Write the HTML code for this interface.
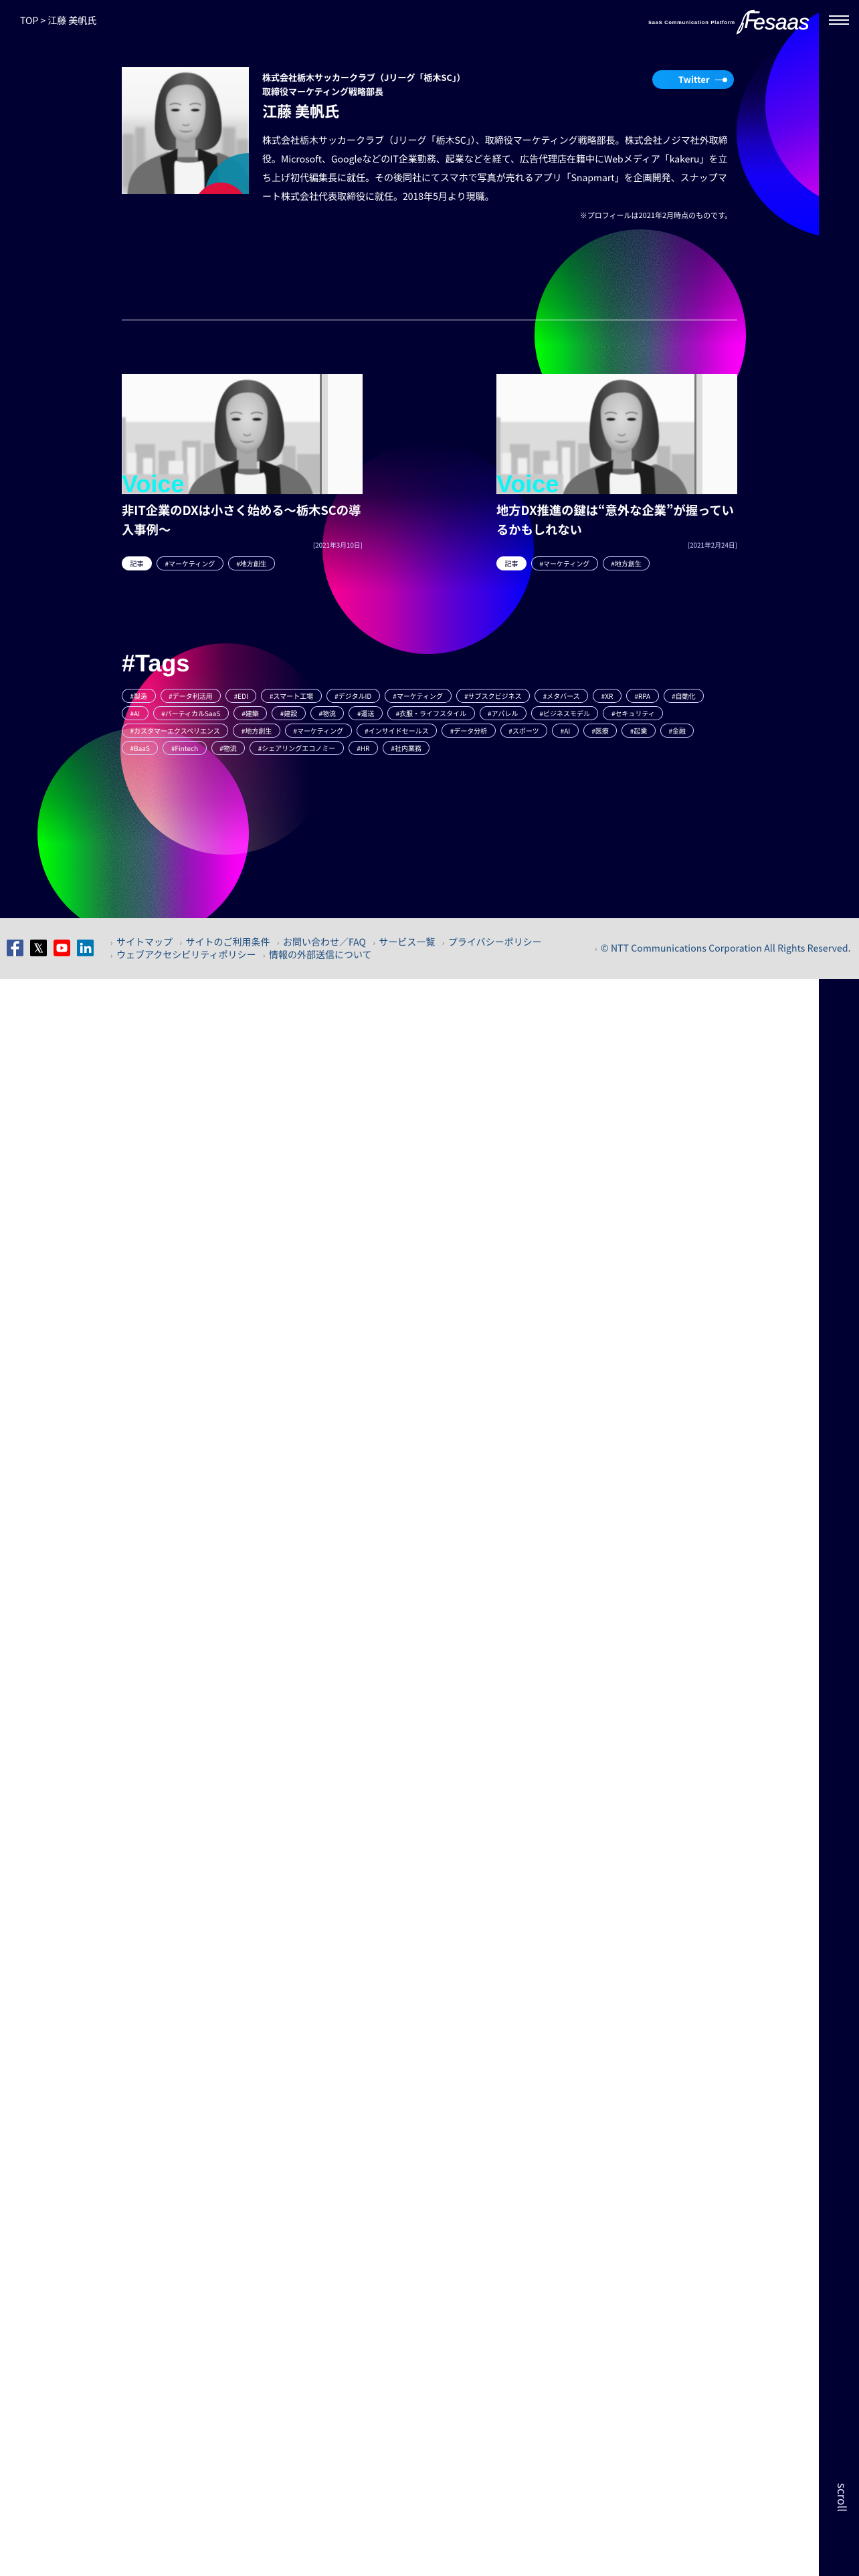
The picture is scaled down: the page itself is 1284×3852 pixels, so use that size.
<!DOCTYPE html>
<html lang="ja"><head><meta charset="utf-8"><title>江藤 美帆氏</title>
<style>
*{box-sizing:border-box;margin:0;padding:0}
html,body{width:1284px;height:3852px;background:#fff;overflow:hidden}
body{position:relative;font-family:"Noto Sans CJK JP","Liberation Sans",sans-serif;color:#fff}
.a{position:absolute;white-space:nowrap}
#navy{position:absolute;left:0;top:0;width:1284px;height:1373px;background:#000033}
#strip{position:absolute;left:1224px;top:0;width:60px;height:3852px;background:#000033}
#foot{position:absolute;left:0;top:1373px;width:1284px;height:91px;background:#e0e0e0}
.row{position:absolute;left:182px;display:flex;gap:7px}
.t{display:block;height:21px;line-height:19px;border:1px solid #d4d4ff;border-radius:11px;padding:0 11.5px;font-size:10px;color:#fff;white-space:nowrap}
.t.w{background:#fff;color:#000033;border-color:#fff}
.fl{position:absolute;font-size:14px;line-height:19px;color:#1b4b7d;white-space:nowrap}
.fl i{display:inline-block;width:9px;font-style:normal;color:#777;font-size:11px}
.fl span{margin-right:10.5px}
.title{font-size:18.3px;font-weight:700;line-height:29px}
.date{font-size:9.8px;color:#d8d8ff}
.voice{font-family:"Liberation Sans",sans-serif;font-weight:700;font-size:36px;color:#0ff4f4;line-height:36px}
</style></head><body>
<div id="navy"></div><div id="strip"></div>

<svg class="a" style="left:0;top:0" width="1224" height="1373" viewBox="0 0 1224 1373">
<defs>
<linearGradient id="gGM"><stop offset="0" stop-color="#00ff00"/><stop offset=".14" stop-color="#00d020"/><stop offset=".36" stop-color="#0b6238"/><stop offset=".53" stop-color="#2f4c64"/><stop offset=".7" stop-color="#8a10b0"/><stop offset=".92" stop-color="#f000f0"/><stop offset="1" stop-color="#ff00ff"/></linearGradient>
<linearGradient id="gPB"><stop offset="0" stop-color="#ff0090"/><stop offset=".3" stop-color="#c000a8"/><stop offset=".6" stop-color="#6000d0"/><stop offset="1" stop-color="#0000ff"/></linearGradient>
<linearGradient id="gB" x1="0" y1="0" x2="0" y2="1"><stop offset="0" stop-color="#100070"/><stop offset=".3" stop-color="#200090"/><stop offset=".55" stop-color="#2000f0"/><stop offset="1" stop-color="#0000ff"/></linearGradient>
<linearGradient id="gI" x1="0" y1="0" x2=".45" y2="1"><stop offset=".1" stop-color="#0000ff"/><stop offset=".55" stop-color="#5a00f0"/><stop offset="1" stop-color="#f000f0"/></linearGradient>
<linearGradient id="gR" x1="0" y1="0" x2="0" y2="1"><stop offset=".1" stop-color="#e80048"/><stop offset=".4" stop-color="#d82858"/><stop offset=".75" stop-color="#d85a68"/><stop offset="1" stop-color="#dca060"/></linearGradient>
<linearGradient id="mV" x1="0" y1="0" x2="0" y2="1"><stop offset="0" stop-color="#666"/><stop offset=".35" stop-color="#bbb"/><stop offset=".55" stop-color="#fff"/></linearGradient>
<linearGradient id="mP" x1="0" y1="0" x2="0" y2="1"><stop offset="0" stop-color="#000"/><stop offset=".25" stop-color="#333"/><stop offset=".5" stop-color="#aaa"/><stop offset=".7" stop-color="#fff"/></linearGradient>
<linearGradient id="mR"><stop offset="0" stop-color="#fff"/><stop offset=".15" stop-color="#fff"/><stop offset=".5" stop-color="#555"/><stop offset=".9" stop-color="#000"/></linearGradient>
<linearGradient id="mN"><stop offset=".15" stop-color="#000"/><stop offset=".35" stop-color="#555"/><stop offset=".58" stop-color="#555"/><stop offset=".8" stop-color="#000"/></linearGradient>
<mask id="m1" maskContentUnits="objectBoundingBox"><rect width="1" height="1" fill="url(#mV)"/></mask>
<mask id="m2" maskContentUnits="objectBoundingBox"><rect width="1" height="1" fill="url(#mP)"/></mask>
<mask id="m3" maskContentUnits="objectBoundingBox"><rect width="1" height="1" fill="url(#mR)"/></mask>
<mask id="m4" maskContentUnits="objectBoundingBox"><rect width="1" height="1" fill="url(#mN)"/></mask>
<filter id="nz" x="0" y="0" width="100%" height="100%"><feTurbulence type="fractalNoise" baseFrequency="1.1" numOctaves="2" seed="4"/><feColorMatrix values="0 0 0 0 .62  0 0 0 0 .66  0 0 0 0 .7  2.4 0 0 0 -.9"/></filter>
<clipPath id="cG1"><circle cx="957" cy="501" r="158"/></clipPath>
<clipPath id="cG2"><circle cx="214" cy="1246" r="158"/></clipPath>
</defs>
<circle cx="1259" cy="198" r="158" fill="url(#gB)" mask="url(#m2)"/>
<circle cx="1302" cy="156" r="158" fill="url(#gI)"/>
<circle cx="640" cy="820" r="158" fill="url(#gPB)" mask="url(#m2)"/>
<circle cx="957" cy="501" r="158" fill="url(#gGM)" mask="url(#m1)"/>
<g clip-path="url(#cG1)"><rect x="799" y="343" width="316" height="316" filter="url(#nz)" mask="url(#m4)"/></g>
<circle cx="214" cy="1246" r="158" fill="url(#gGM)" mask="url(#m1)"/>
<g clip-path="url(#cG2)"><rect x="56" y="1088" width="316" height="316" filter="url(#nz)" mask="url(#m4)"/></g>
<circle cx="338" cy="1120" r="158" fill="url(#gR)" mask="url(#m3)" style="mix-blend-mode:screen"/>
</svg>

<div class="a" style="left:30px;top:20px;font-size:14px;line-height:22px">TOP &gt; 江藤 美帆氏</div>

<div class="a" style="left:969px;top:28px;font-size:7.5px;line-height:12px;font-weight:700;letter-spacing:.75px;font-family:'Liberation Sans',sans-serif">SaaS Communication Platform</div>
<div class="a" style="left:1112px;top:7px;font-size:36px;line-height:46px;font-style:italic;font-family:'Liberation Sans',sans-serif">F</div>
<div class="a" style="left:1126px;top:13px;font-size:32px;line-height:40px;font-style:italic;letter-spacing:-.4px;font-family:'Liberation Sans',sans-serif;-webkit-text-stroke:.4px #fff">esaas</div>
<svg class="a" style="left:1098px;top:14px" width="34" height="38" viewBox="0 0 34 38"><path d="M30 2C20 1 15 8 12 18C10 25 6 28 4 36C9 34 12 28 13 20" fill="none" stroke="#fff" stroke-width="2"/></svg>
<div class="a" style="left:1239px;top:23px;width:30px;height:2px;background:#fff"></div>
<div class="a" style="left:1239px;top:29px;width:30px;height:2px;background:#fff"></div>
<div class="a" style="left:1239px;top:35px;width:30px;height:2px;background:#fff"></div>

<svg class="a" style="left:182px;top:100px" width="190" height="190" viewBox="0 0 190 190">
<defs>
<linearGradient id="s1" x1="0" y1="0" x2="0" y2="1"><stop offset="0" stop-color="#fafafa"/><stop offset=".36" stop-color="#f2f2f2"/><stop offset=".46" stop-color="#dadada"/><stop offset="1" stop-color="#c4c4c4"/></linearGradient>
<linearGradient id="hr" x1="0" y1="0" x2="1" y2="0"><stop offset="0" stop-color="#2e2e2e"/><stop offset=".5" stop-color="#666"/><stop offset="1" stop-color="#2e2e2e"/></linearGradient>
<radialGradient id="fc" cx=".5" cy=".42" r=".62"><stop offset="0" stop-color="#dcdcdc"/><stop offset=".7" stop-color="#c0c0c0"/><stop offset="1" stop-color="#8e8e8e"/></radialGradient>
<filter id="bl1"><feGaussianBlur stdDeviation="2.2"/></filter>
<filter id="bl2"><feGaussianBlur stdDeviation=".8"/></filter>
<filter id="bl3"><feGaussianBlur stdDeviation="1.4"/></filter>
<g id="person">
<path d="M187 9C226 9 243 50 243 95C243 118 231 131 215 131L160 131C148 131 139 118 139 95C139 50 150 9 187 9Z" fill="url(#hr)"/>
<path d="M172 105H202V152H172Z" fill="#a8a8a8"/>
<path d="M156 58C156 36 170 28 190 28C208 28 218 40 218 60C218 88 208 119 187 119C168 119 156 88 156 58Z" fill="url(#fc)"/>
<path d="M96 210C96 158 118 150 160 134L172 142L215 142L238 135C265 145 288 155 290 210Z" fill="#6e6e6e"/>
<path d="M158 210L147 142L175 128L174 148L178 210ZM240 210L236 140L206 128L206 148L218 210Z" fill="#1c1c1c"/>
<path d="M170 210C170 160 168 150 172 148C182 152 200 152 212 148C216 152 216 165 216 210Z" fill="#f4f4f4"/>
<ellipse cx="171" cy="68" rx="7" ry="2.4" fill="#222"/><ellipse cx="202" cy="68" rx="7" ry="2.4" fill="#222"/>
<path d="M162 60Q171 55 180 60M193 60Q202 55 211 60" stroke="#555" stroke-width="1.6" fill="none"/>
<path d="M182 90Q187 95 193 90" stroke="#888" stroke-width="2" fill="none"/>
<path d="M177 100Q187 106 198 100Q187 103 177 100Z" fill="#777" stroke="#888"/>
</g>
<g id="city">
<path d="M0 72H300V180H0Z" fill="#dcdcdc"/>
<path d="M0 65H6V180H0ZM20 105H50V180H20ZM55 115H80V180H55ZM90 100H118V180H90ZM122 104H140V180H122ZM240 108H260V180H240ZM262 120H298V180H262Z" fill="#bcbcbc"/>
<path d="M8 118H22V180H8ZM32 126H46V180H32ZM70 130H92V180H70ZM98 110H110V180H98Z" fill="#eeeeee"/>
<path d="M0 150H100V180H0Z" fill="#cacaca"/>
</g>
</defs>
<rect width="190" height="190" fill="#f6f6f6"/>
<g filter="url(#bl1)"><rect y="0" width="190" height="190" fill="url(#s1)"/><path d="M20 90H35V170H20ZM150 90H170V170H150ZM0 100H18V180H0ZM172 108H190V170H172Z" fill="#b4b4b4"/></g>
<g filter="url(#bl2)" transform="translate(-84 0) scale(.96 .95)"><use href="#person"/></g>
<circle cx="190" cy="195" r="66" fill="#0a8aa8" opacity=".92"/>
<circle cx="148" cy="213" r="40" fill="#e0103c"/>
</svg>

<div class="a" style="left:392px;top:105px;font-size:13px;font-weight:700;line-height:21px">株式会社栃木サッカークラブ（Jリーグ「栃木SC」）<br>取締役マーケティング戦略部長</div>
<div class="a" style="left:392px;top:150px;font-size:22px;font-weight:700;line-height:32px">江藤 美帆氏</div>
<div class="a" style="left:392px;top:196px;font-size:14px;line-height:28px;font-feature-settings:'palt' 0">株式会社栃木サッカークラブ（Jリーグ「栃木SC」）、取締役マーケティング戦略部長。株式会社ノジマ社外取締<br>役。Microsoft、GoogleなどのIT企業勤務、起業などを経て、広告代理店在籍中にWebメディア「kakeru」を立<br>ち上げ初代編集長に就任。その後同社にてスマホで写真が売れるアプリ「Snapmart」を企画開発、スナップマ<br>ート株式会社代表取締役に就任。2018年5月より現職。</div>
<div class="a" style="right:190px;top:313px;font-size:11px;line-height:18px">※プロフィールは2021年2月時点のものです。</div>

<div class="a" style="left:975px;top:105px;width:122px;height:28px;border-radius:14px;background:linear-gradient(90deg,#0a9cf8,#0a8ff0)"></div>
<div class="a" style="left:1014px;top:108px;font-size:13px;font-weight:700;line-height:22px">Twitter</div>
<div class="a" style="left:1069px;top:118.5px;width:14px;height:1.5px;background:#fff"></div>
<div class="a" style="left:1080px;top:116px;width:7px;height:7px;border-radius:50%;background:#fff"></div>

<div class="a" style="left:182px;top:478px;width:920px;height:1px;background:#fff"></div>

<svg class="a" style="left:182px;top:559px" width="360" height="180" viewBox="0 0 360 180">
<rect width="360" height="180" fill="#fbfbfb"/>
<g filter="url(#bl3)"><use href="#city"/></g>
<rect x="296" width="3" height="180" fill="#777"/><rect x="299" width="9" height="180" fill="#dcdcdc"/><rect x="308" width="52" height="180" fill="#fafafa"/>
<g filter="url(#bl2)"><use href="#person"/></g>
</svg>
<div class="a voice" style="left:182px;top:706px;height:33px;overflow:hidden">Voice</div>

<svg class="a" style="left:742px;top:559px" width="360" height="180" viewBox="0 0 360 180">
<rect width="360" height="180" fill="#fbfbfb"/>
<g filter="url(#bl3)"><use href="#city"/></g>
<rect x="296" width="3" height="180" fill="#777"/><rect x="299" width="9" height="180" fill="#dcdcdc"/><rect x="308" width="52" height="180" fill="#fafafa"/>
<g filter="url(#bl2)"><use href="#person"/></g>
</svg>
<div class="a voice" style="left:742px;top:706px;height:33px;overflow:hidden">Voice</div>

<div class="a title" style="left:182px;top:749px">非IT企業のDXは小さく始める〜栃木SCの導<br>入事例〜</div>
<div class="a title" style="left:742px;top:749px">地方DX推進の鍵は“意外な企業”が握ってい<br>るかもしれない</div>
<div class="a date" style="right:742px;top:807px;line-height:16px">[2021年3月10日]</div>
<div class="a date" style="right:182px;top:807px;line-height:16px">[2021年2月24日]</div>

<div class="row" style="top:832px"><span class="t w">記事</span><span class="t">#マーケティング</span><span class="t">#地方創生</span></div>
<div class="row" style="top:832px;left:742px"><span class="t w">記事</span><span class="t">#マーケティング</span><span class="t">#地方創生</span></div>

<div class="a" style="left:182px;top:970px;font-family:'Liberation Sans',sans-serif;font-weight:700;font-size:36px;line-height:44px">#Tags</div>

<div class="row" style="top:1030px"><span class="t">#製造</span><span class="t">#データ利活用</span><span class="t">#EDI</span><span class="t">#スマート工場</span><span class="t">#デジタルID</span><span class="t">#マーケティング</span><span class="t">#サブスクビジネス</span><span class="t">#メタバース</span><span class="t">#XR</span><span class="t">#RPA</span><span class="t">#自動化</span></div>
<div class="row" style="top:1056px"><span class="t">#AI</span><span class="t">#バーティカルSaaS</span><span class="t">#建築</span><span class="t">#建設</span><span class="t">#物流</span><span class="t">#運送</span><span class="t">#衣服・ライフスタイル</span><span class="t">#アパレル</span><span class="t">#ビジネスモデル</span><span class="t">#セキュリティ</span></div>
<div class="row" style="top:1082px"><span class="t">#カスタマーエクスペリエンス</span><span class="t">#地方創生</span><span class="t">#マーケティング</span><span class="t">#インサイドセールス</span><span class="t">#データ分析</span><span class="t">#スポーツ</span><span class="t">#AI</span><span class="t">#医療</span><span class="t">#起業</span><span class="t">#金融</span></div>
<div class="row" style="top:1108px"><span class="t">#BaaS</span><span class="t">#Fintech</span><span class="t">#物流</span><span class="t">#シェアリングエコノミー</span><span class="t">#HR</span><span class="t">#社内業務</span></div>

<div id="foot"></div>
<svg class="a" style="left:10px;top:1405px" width="130" height="25" viewBox="0 0 130 25">
<rect width="25" height="25" rx="2" fill="#3b5998"/>
<path d="M14 25V14.5H18L18.600 10.500H14V8C14 6.800 14.500 6 16.200 6H18.700V2.400C18 2.300 16.700 2.200 15.300 2.200C12.200 2.200 10 4 10 7.500V10.500H6.500V14.500H10V25Z" fill="#fff"/>
<rect x="35" width="25" height="25" rx="2" fill="#000"/>
<path d="M42 6H46.500L53.500 19H49ZM43.800 7L49.600 18M52.500 6L48.300 11.500M46.300 14L42.300 19" fill="none" stroke="#fff" stroke-width="1"/>
<rect x="70" width="25" height="25" rx="3" fill="#f00"/>
<rect x="74.500" y="6.500" width="16" height="12" rx="3" fill="#fff"/>
<path d="M80.500 9.500L85.500 12.500L80.500 15.500Z" fill="#f00"/>
<rect x="105" width="25" height="25" rx="2" fill="#0077b5"/>
<rect x="110" y="10" width="3.500" height="10" fill="#fff"/><circle cx="111.700" cy="6.700" r="2" fill="#fff"/>
<path d="M116 10H119.300V11.500C120 10.500 121 9.800 122.700 9.800C125.500 9.800 126.500 11.500 126.500 14.300V20H123V14.800C123 13.300 122.500 12.700 121.400 12.700C120.200 12.700 119.500 13.500 119.500 15V20H116Z" fill="#fff"/>
</svg>
<div class="fl" style="left:165px;top:1400px"><i>›</i><span>サイトマップ</span><i>›</i><span>サイトのご利用条件</span><i>›</i><span>お問い合わせ／FAQ</span><i>›</i><span>サービス一覧</span><i>›</i><span>プライバシーポリシー</span></div>
<div class="fl" style="left:165px;top:1419px"><i>›</i><span>ウェブアクセシビリティポリシー</span><i>›</i><span>情報の外部送信について</span></div>
<div class="fl" style="left:889px;top:1409px;letter-spacing:.08px"><i>›</i>© NTT Communications Corporation All Rights Reserved.</div>

<div class="a" style="left:1249px;top:3713px;writing-mode:vertical-rl;font-size:17px;line-height:20px;color:#e6e6ff">scroll</div>
</body></html>
